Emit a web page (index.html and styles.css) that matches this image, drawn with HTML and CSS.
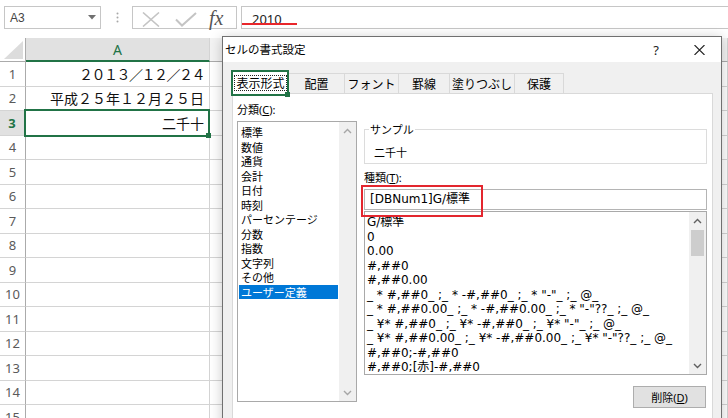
FILE: index.html
```html
<!DOCTYPE html>
<html lang="ja">
<head>
<meta charset="utf-8">
<title>Excel</title>
<link rel="stylesheet" href="styles.css">
</head>
<body>
<div class="app">
  <div class="fbar">
    <div class="namebox">
      <span class="nb-text">A3</span>
      <svg class="nb-arrow" width="8" height="5" viewBox="0 0 8 5"><path d="M0 0H8L4 4.5Z" fill="#707070"/></svg>
    </div>
    <svg class="vdots" width="3" height="11" viewBox="0 0 3 11"><circle cx="1.5" cy="1.5" r="1" fill="#a8a8a8"/><circle cx="1.5" cy="5.5" r="1" fill="#a8a8a8"/><circle cx="1.5" cy="9.5" r="1" fill="#a8a8a8"/></svg>
    <div class="fbtns">
      <svg class="ic-x" width="18" height="15" viewBox="0 0 18 15"><path d="M1 0.5L17 14.5M17 0.5L1 14.5" stroke="#c4c4c4" stroke-width="1.6" fill="none"/></svg>
      <svg class="ic-check" width="22" height="15" viewBox="0 0 22 15"><path d="M1 7.5L7 13.5L21 1" stroke="#c4c4c4" stroke-width="2" fill="none"/></svg>
      <span class="fx">fx</span>
    </div>
    <div class="finput"><span class="fval">2010</span><span class="redline"></span></div>
  </div>

  <div class="sheet">
    <div class="corner"><svg width="19" height="18" viewBox="0 0 19 18"><path d="M19 0V18H0Z" fill="#dcdcdc"/></svg></div>
    <div class="ch sel">A</div>
    <div class="ch">B</div>

    <div class="rh">1</div><div class="c ca"><span class="narrow">２０１３／１２／２４</span></div><div class="c"></div>
    <div class="rh">2</div><div class="c ca">平成２５年１２月２５日</div><div class="c"></div>
    <div class="rh sel">3</div><div class="c ca active">二千十</div><div class="c"></div>
    <div class="rh">4</div><div class="c ca"></div><div class="c"></div>
    <div class="rh">5</div><div class="c ca"></div><div class="c"></div>
    <div class="rh">6</div><div class="c ca"></div><div class="c"></div>
    <div class="rh">7</div><div class="c ca"></div><div class="c"></div>
    <div class="rh">8</div><div class="c ca"></div><div class="c"></div>
    <div class="rh">9</div><div class="c ca"></div><div class="c"></div>
    <div class="rh">10</div><div class="c ca"></div><div class="c"></div>
    <div class="rh">11</div><div class="c ca"></div><div class="c"></div>
    <div class="rh">12</div><div class="c ca"></div><div class="c"></div>
    <div class="rh">13</div><div class="c ca"></div><div class="c"></div>
    <div class="rh">14</div><div class="c ca"></div><div class="c"></div>
    <div class="rh">15</div><div class="c ca"></div><div class="c"></div>
  </div>

  <div class="dialog">
    <div class="titlebar">
      <span class="title">セルの書式設定</span>
      <span class="help">?</span>
      <svg class="close" width="11" height="10" viewBox="0 0 11 10"><path d="M0.5 0L10.5 10M10.5 0L0.5 10" stroke="#222" stroke-width="1.1" fill="none"/></svg>
    </div>
    <div class="dbody">
      <div class="tabs">
        <div class="tab active w1"><span class="focus">表示形式</span></div>
        <div class="tab w2">配置</div>
        <div class="tab w3">フォント</div>
        <div class="tab w4">罫線</div>
        <div class="tab w5">塗りつぶし</div>
        <div class="tab w6 last">保護</div>
      </div>
      <div class="panel">
        <div class="col-left">
          <div class="lbl">分類(<u>C</u>):</div>
          <div class="listbox cat">
            <div class="items">
              <div class="it">標準</div>
              <div class="it">数値</div>
              <div class="it">通貨</div>
              <div class="it">会計</div>
              <div class="it">日付</div>
              <div class="it">時刻</div>
              <div class="it">パーセンテージ</div>
              <div class="it">分数</div>
              <div class="it">指数</div>
              <div class="it">文字列</div>
              <div class="it">その他</div>
              <div class="it selected">ユーザー定義</div>
            </div>
            <div class="vscroll">
              <div class="arr"><svg width="9" height="6" viewBox="0 0 9 6"><path d="M1 5L4.5 1.5L8 5" stroke="#a6a6a6" stroke-width="1.4" fill="none"/></svg></div>
              <div class="track"></div>
              <div class="arr"><svg width="9" height="6" viewBox="0 0 9 6"><path d="M1 1L4.5 4.5L8 1" stroke="#a6a6a6" stroke-width="1.4" fill="none"/></svg></div>
            </div>
          </div>
        </div>
        <div class="col-right">
          <fieldset class="sample">
            <legend>サンプル</legend>
            <div class="sample-val">二千十</div>
          </fieldset>
          <div class="lbl type-lbl">種類(<u>T</u>):</div>
          <div class="typebox">[DBNum1]G/標準<span class="redbox"></span></div>
          <div class="listbox fmt">
            <div class="items">
              <div class="it">G/標準</div>
              <div class="it">0</div>
              <div class="it">0.00</div>
              <div class="it">#,##0</div>
              <div class="it">#,##0.00</div>
              <div class="it">_ * #,##0_ ;_ * -#,##0_ ;_ * "-"_ ;_ @_</div>
              <div class="it">_ * #,##0.00_ ;_ * -#,##0.00_ ;_ * "-"??_ ;_ @_</div>
              <div class="it">_ ¥* #,##0_ ;_ ¥* -#,##0_ ;_ ¥* "-"_ ;_ @_</div>
              <div class="it">_ ¥* #,##0.00_ ;_ ¥* -#,##0.00_ ;_ ¥* "-"??_ ;_ @_</div>
              <div class="it">#,##0;-#,##0</div>
              <div class="it">#,##0;[赤]-#,##0</div>
            </div>
            <div class="vscroll">
              <div class="arr"><svg width="9" height="6" viewBox="0 0 9 6"><path d="M1 5L4.5 1.5L8 5" stroke="#606060" stroke-width="1.4" fill="none"/></svg></div>
              <div class="thumb"></div>
              <div class="track"></div>
              <div class="arr"><svg width="9" height="6" viewBox="0 0 9 6"><path d="M1 1L4.5 4.5L8 1" stroke="#606060" stroke-width="1.4" fill="none"/></svg></div>
            </div>
          </div>
          <div class="btnrow"><button class="btn">削除(<u>D</u>)</button></div>
        </div>
      </div>
    </div>
  </div>
</div>
</body>
</html>
```

FILE: styles.css
```css
* { box-sizing: border-box; }
html, body { margin: 0; padding: 0; }
body {
  width: 728px;
  height: 418px;
  overflow: hidden;
  background: #ffffff;
  font-family: "Noto Sans", "Noto Sans CJK JP", sans-serif;
  color: #000;
}
.app { position: relative; width: 728px; height: 418px; overflow: hidden; }

/* formula bar */
.fbar { height: 38px; display: flex; align-items: flex-start; padding-top: 6px; }
.namebox {
  margin-left: 4px; width: 97px; height: 23px;
  border: 1px solid #c6c6c6;
  display: flex; align-items: center; padding-left: 5px;
}
.nb-text { flex: 1; font-family: "Liberation Sans", sans-serif; font-size: 12px; color: #444; }
.nb-arrow { margin-right: 4px; }
.vdots { margin-left: 15px; margin-top: 6px; }
.fbtns {
  margin-left: 13px; width: 105px; height: 23px;
  border: 1px solid #c6c6c6;
  display: flex; align-items: center;
}
.ic-x { margin-left: 9px; margin-top: 4px; }
.ic-check { margin-left: 15px; margin-top: 4px; }
.fx {
  margin-left: 12px; font-family: "Liberation Serif", serif; font-style: italic;
  font-size: 20px; line-height: 21px; color: #555; margin-top: 1px;
}
.finput {
  position: relative; margin-left: 4px; flex: 1; height: 23px;
  border: 1px solid #c6c6c6; border-right: none; padding-left: 10px;
}
.fval { font-family: "Noto Sans", sans-serif; font-size: 13px; line-height: 21px; color: #222; }
.redline { position: absolute; left: 0; top: 16px; width: 55px; height: 2px; background: #e8262b; }

/* sheet */
.sheet {
  display: grid;
  grid-template-columns: 26px 184px 1fr;
  grid-template-rows: 24px repeat(15, 24.5px);
}
.corner { border-right: 1px solid #ababab; border-bottom: 1px solid #ababab; display: flex; align-items: flex-end; justify-content: flex-end; padding: 0 2px 2px 0; }
.ch {
  border-right: 1px solid #d4d4d4; border-bottom: 1px solid #ababab;
  display: flex; align-items: center; justify-content: center;
  font-family: "Noto Sans", sans-serif; font-size: 14px; color: #444; background: #f3f3f3;
}
.ch.sel { background: #e1e1e1; color: #217346; border-bottom: 2px solid #217346; }
.rh {
  border-right: 1px solid #ababab; border-bottom: 1px solid #d4d4d4;
  display: flex; align-items: center; justify-content: center;
  font-family: "Noto Sans", sans-serif; font-size: 13px; color: #5a5a5a;
}
.rh.sel { background: #e1e1e1; color: #217346; font-weight: 700; border-right: 2px solid #217346; }
.c { border-bottom: 1px solid #d4d4d4; border-right: 1px solid #d4d4d4; }
.ca {
  display: flex; align-items: center; justify-content: flex-end; padding-right: 5px;
  font-family: "Noto Sans CJK JP", sans-serif; font-size: 14px; color: #111; white-space: nowrap;
}
.narrow { letter-spacing: -1.5px; }
.active { position: relative; z-index: 1; }
.active::after {
  content: ""; position: absolute; left: -2px; top: -2px; right: -1px; bottom: -2px;
  border: 2px solid #217346;
}
.active::before {
  content: ""; position: absolute; right: -2px; bottom: -3px; width: 5px; height: 5px;
  background: #217346; z-index: 2;
}

/* dialog */
.dialog {
  position: absolute; left: 222px; top: 36px; width: 500px; height: 392px;
  border: 1px solid #707070; background: #f0f0f0; z-index: 5;
  box-shadow: 0 2px 12px rgba(0, 0, 0, 0.22);
  display: flex; flex-direction: column;
  font-family: "Noto Sans", "Noto Sans CJK JP", sans-serif; font-size: 11px;
}
.titlebar { height: 25px; background: #fff; display: flex; align-items: center; padding-left: 2px; }
.title { flex: 1; font-size: 11.5px; line-height: 25px; color: #000; }
.help { font-family: "Noto Sans", sans-serif; font-size: 13px; color: #222; margin-right: 35px; }
.close { margin-right: 16px; }
.dbody { flex: 1; padding: 9px 8px 0 9px; display: flex; flex-direction: column; }
.tabs { display: flex; align-items: flex-end; height: 22px; }
.tab {
  height: 20px; border: 1px solid #d9d9d9; border-bottom: none; border-right: none;
  font-family: "Noto Sans CJK JP", sans-serif; font-size: 12px; line-height: 19px;
  text-align: center; background: #f0f0f0; color: #000;
}
.tab.last { border-right: 1px solid #d9d9d9; }
.tab.active {
  height: 23px; margin-bottom: -1px; position: relative; z-index: 1;
  background: #fff; padding: 3px 1px 0 1px; border-right: 1px solid #d9d9d9;
}
.tab.active + .tab { border-left: none; }
.focus { display: block; height: 16px; line-height: 14px; border: 1px dotted #222; }
.w1 { width: 57px; } .w2 { width: 55px; } .w3 { width: 54px; }
.w4 { width: 51px; } .w5 { width: 65px; } .w6 { width: 50px; }
.panel {
  flex: 1; background: #fff; border: 1px solid #d9d9d9;
  display: flex; align-items: flex-start; gap: 7px; padding: 0 5px 0 4px;
}
.lbl { font-size: 11px; line-height: 14px; color: #000; white-space: nowrap; }
.col-left { width: 120px; padding-top: 9px; }
.listbox { border: 1px solid #a9a9a9; background: #fff; display: flex; position: relative; }
.listbox.cat { margin-top: 4px; height: 281px; }
.items { flex: 1; padding: 3px 1px 0 1px; overflow: hidden; }
.it { height: 14.5px; line-height: 14.5px; padding-left: 2px; white-space: pre; }
.cat .it { font-family: "Noto Sans CJK JP", sans-serif; font-size: 11px; }
.cat .it.selected { background: #0078d7; color: #fff; }
.vscroll { width: 17px; background: #f0f0f0; display: flex; flex-direction: column; }
.arr { height: 17px; display: flex; align-items: center; justify-content: center; }
.track { flex: 1; }
.thumb { height: 26px; margin: 1px 2px 0 2px; background: #cdcdcd; }

.col-right { width: 343px; display: flex; flex-direction: column; }
.sample {
  margin: 28px 0 0 0; padding: 0; border: 1px solid #dcdcdc; min-width: 0;
}
.sample legend {
  margin-left: 4px; padding: 0 1px; font-family: "Noto Sans CJK JP", sans-serif;
  font-size: 11px; line-height: 14px; color: #000;
}
.sample-val { padding: 9px 0 4px 9px; font-family: "Noto Sans CJK JP", sans-serif; font-size: 11px; line-height: 14px; }
.type-lbl { margin-top: 7px; }
.typebox {
  position: relative; margin-top: 4px; height: 21px; border: 1px solid #b4b4b4;
  padding-left: 5px; font-family: "DejaVu Sans", "Noto Sans CJK JP", sans-serif;
  font-size: 12px; line-height: 19px; white-space: nowrap;
}
.redbox {
  position: absolute; left: -4px; top: -5px; width: 122px; height: 32px;
  border: 2px solid #e3262e; z-index: 3;
}
.listbox.fmt { margin-top: 1px; height: 164px; }
.fmt .it { font-family: "DejaVu Sans", "Noto Sans CJK JP", sans-serif; font-size: 12px; padding-left: 1px; }
.btnrow { display: flex; justify-content: flex-end; margin-top: 11px; padding-right: 1px; }
.btn {
  width: 73px; height: 22px; margin: 0; padding: 0;
  background: #e1e1e1; border: 1px solid #adadad;
  font-family: "Noto Sans", "Noto Sans CJK JP", sans-serif; font-size: 11px; line-height: 19px; color: #000;
}
```
